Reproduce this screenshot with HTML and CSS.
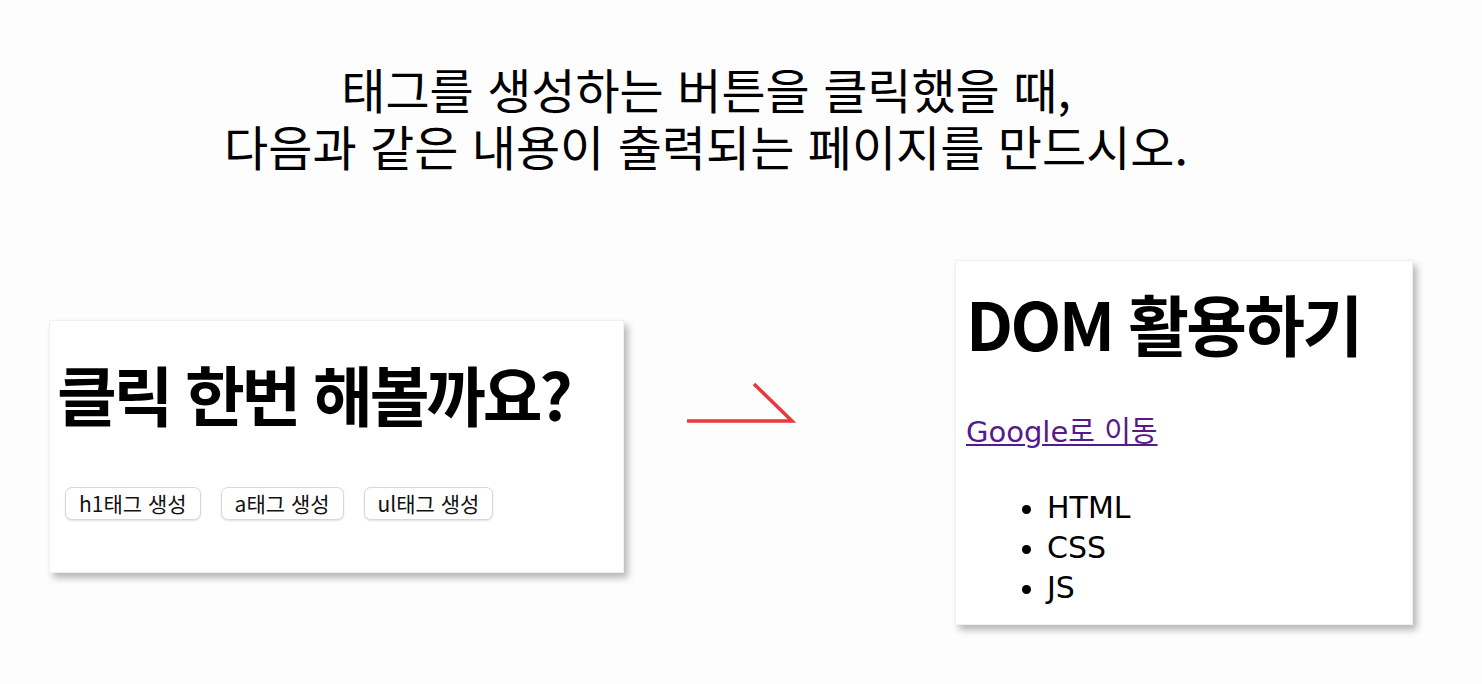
FILE: index.html
```html
<!DOCTYPE html>
<html lang="ko">
<head>
  <meta charset="UTF-8">
  <meta name="viewport" content="width=device-width, initial-scale=1.0">
  <title>DOM 활용하기</title>
  <link rel="stylesheet" href="styles.css">
</head>
<body>

  <p class="prompt">
    태그를 생성하는 버튼을 클릭했을 때,<br>
    다음과 같은 내용이 출력되는 페이지를 만드시오.
  </p>

  <div class="demo">
    <div class="card before">
      <h1>클릭 한번 해볼까요?</h1>
      <div class="buttons">
        <button type="button">h1태그 생성</button>
        <button type="button">a태그 생성</button>
        <button type="button">ul태그 생성</button>
      </div>
    </div>

    <svg class="arrow" width="112" height="44" viewBox="0 0 112 44">
      <path d="M2 40 H107 L69 3" fill="none" stroke="#e8393e" stroke-width="3.5" />
    </svg>

    <div class="card after">
      <h1>DOM 활용하기</h1>
      <a class="link" href="#">Google로 이동</a>
      <ul>
        <li>HTML</li>
        <li>CSS</li>
        <li>JS</li>
      </ul>
    </div>
  </div>

</body>
</html>
```

FILE: styles.css
```css
body {
  margin: 0;
  background-color: #fdfdfd;
  font-family: "Noto Sans CJK KR", sans-serif;
  color: #000;
}

.prompt {
  margin: 0;
  padding-top: 60px;
  padding-right: 70px;
  text-align: center;
  font-size: 48px;
  line-height: 57px;
}

.demo {
  display: flex;
  align-items: flex-start;
  padding: 86px 0 40px 49px;
}

.card {
  background: white;
  border: 1px solid #f0f0f0;
  box-shadow: 4px 5px 7px rgba(0, 0, 0, 0.28);
  box-sizing: border-box;
}

.card h1 {
  margin: 0;
  font-size: 65px;
  line-height: 77px;
  letter-spacing: -0.05em;
  font-weight: bold;
}

.before {
  width: 575px;
  height: 253px;
  margin-top: 60px;
  padding: 34px 8px 0 7px;
}

.buttons {
  display: flex;
  gap: 20px;
  margin-top: 55px;
  padding-left: 8px;
}

.buttons button {
  height: 33px;
  padding: 0 13px;
  background: white;
  border: 1px solid #d8d8d8;
  border-radius: 7px;
  box-shadow: 0 1px 2px rgba(0, 0, 0, 0.12);
  font-family: "Noto Sans CJK KR", sans-serif;
  font-size: 21px;
  line-height: 31px;
  color: #111;
}

.arrow {
  margin-top: 121px;
  margin-left: 61px;
}

.after {
  width: 458px;
  height: 365px;
  margin-left: 158px;
  padding: 23px 12px 0 10px;
}

.after h1 {
  font-size: 66px;
  letter-spacing: -0.04em;
}

.link {
  display: block;
  margin-top: 51px;
  font-family: "DejaVu Sans", "Noto Sans CJK KR", sans-serif;
  font-size: 29px;
  line-height: 40px;
  color: #551a8b;
}

.after ul {
  margin: 36px 0 0 0;
  padding-left: 81px;
  font-family: "DejaVu Sans", "Noto Sans CJK KR", sans-serif;
  font-size: 30px;
  line-height: 40px;
}
```
